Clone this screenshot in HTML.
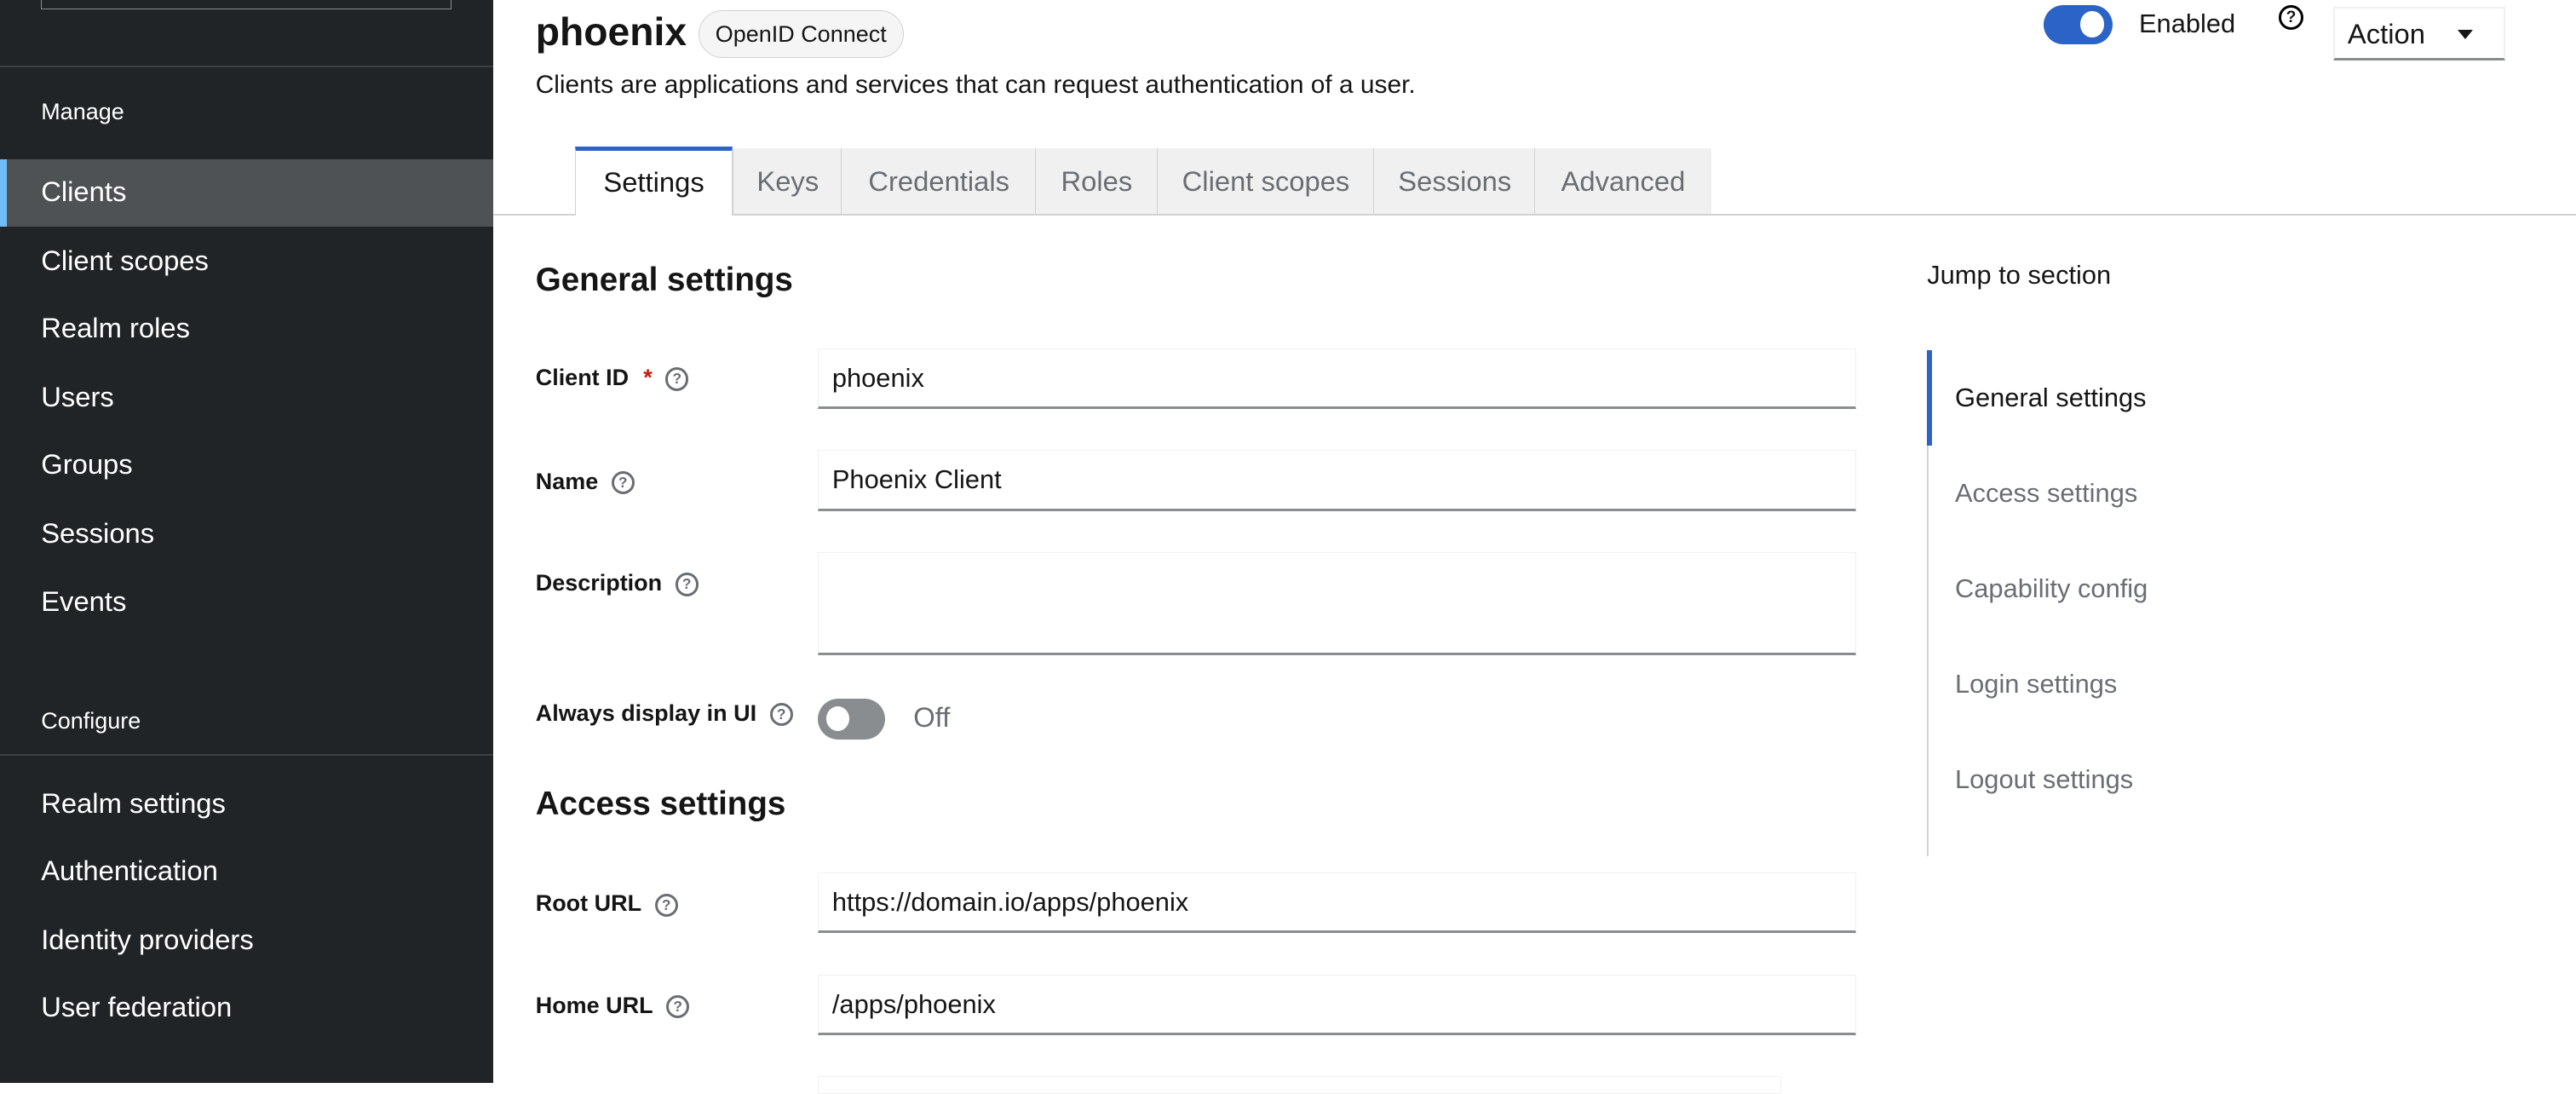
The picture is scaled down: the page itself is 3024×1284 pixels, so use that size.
<!DOCTYPE html>
<html><head><meta charset="utf-8"><style>
html{zoom:1.92857}
body{margin:0;width:1568px;height:659px;overflow:hidden;background:#fff;font-family:"Liberation Sans",sans-serif;color:#151515;position:relative}
.a{position:absolute}
.side{left:0;top:0;width:300px;height:659px;background:#212427}
.nav{position:absolute;left:25px;color:#fff;font-size:17px}
.sec{position:absolute;left:25px;color:#fff;font-size:14px}
.lbl{position:absolute;left:326px;font-size:14px;font-weight:bold}
.q{display:inline-block;width:11px;height:11px;border:1.6px solid #6a6e73;border-radius:50%;font-size:9px;line-height:11px;text-align:center;color:#6a6e73;font-weight:bold;vertical-align:middle;margin-left:8px}
.inp{position:absolute;left:498px;width:632px;border:1px solid #f0f0f0;border-bottom:2px solid #8a8d90;font-size:16px;box-sizing:border-box;padding-left:8px}
.tab{position:absolute;top:90px;height:40px;background:#f0f0f0;border-left:1px solid #d2d2d2;color:#6a6e73;font-size:17px;line-height:40px;text-align:center}
.jl{position:absolute;left:1190px;font-size:16px;color:#6a6e73}
</style></head><body>
<div class="a side">
<div class="a" style="left:25px;top:-2px;width:249px;height:7px;border:1px solid #8a8d90;border-top:none"></div>
<div class="a" style="left:0;top:40px;width:300px;height:1px;background:#3c3f42"></div>
<div class="sec" style="top:60px">Manage</div>
<div class="a" style="left:0;top:97px;width:300px;height:41px;background:#4f5255"></div>
<div class="a" style="left:0;top:97px;width:4px;height:41px;background:#73bcf7"></div>
<div class="nav" style="top:107px">Clients</div>
<div class="nav" style="top:149px">Client scopes</div>
<div class="nav" style="top:190px">Realm roles</div>
<div class="nav" style="top:232px">Users</div>
<div class="nav" style="top:273px">Groups</div>
<div class="nav" style="top:315px">Sessions</div>
<div class="nav" style="top:356px">Events</div>
<div class="sec" style="top:431px">Configure</div>
<div class="a" style="left:0;top:459px;width:300px;height:1px;background:#3c3f42"></div>
<div class="nav" style="top:479px">Realm settings</div>
<div class="nav" style="top:520px">Authentication</div>
<div class="nav" style="top:562px">Identity providers</div>
<div class="nav" style="top:603px">User federation</div>
</div>

<div class="a" style="left:326px;top:5px;font-size:24px;font-weight:bold">phoenix</div>
<div class="a" style="left:425px;top:6px;height:28px;width:124px;border:1px solid #d2d2d2;border-radius:15px;background:#f5f5f5;font-size:14px;line-height:28px;text-align:center">OpenID Connect</div>
<div class="a" style="left:326px;top:43px;font-size:15.5px">Clients are applications and services that can request authentication of a user.</div>

<div class="a" style="left:1244px;top:3px;width:42px;height:24px;border-radius:12px;background:#2b63c6"></div>
<div class="a" style="left:1266px;top:7px;width:15px;height:16px;border-radius:50%;background:#fff"></div>
<div class="a" style="left:1302px;top:5px;font-size:16px">Enabled</div>
<div class="a" style="left:1387px;top:3px;width:12px;height:12px;border:2px solid #000;border-radius:50%;font-size:10px;font-weight:bold;line-height:12px;text-align:center">?</div>
<div class="a" style="left:1420px;top:4px;width:105px;height:33px;border:1.5px solid #f0f0f0;border-bottom:2px solid #8a8d90;box-sizing:border-box"></div>
<div class="a" style="left:1429px;top:11px;font-size:17px">Action</div>
<div class="a" style="left:1496px;top:18px;width:0;height:0;border-left:5px solid transparent;border-right:5px solid transparent;border-top:6px solid #151515"></div>

<div class="a" style="left:300px;top:130px;width:1268px;height:1px;background:#d2d2d2"></div>
<div class="a" style="left:350px;top:89px;width:96px;height:42px;background:#fff;border-left:1px solid #d2d2d2;border-right:1px solid #d2d2d2;border-top:3px solid #2b63c6;box-sizing:border-box;font-size:17px;line-height:38px;text-align:center">Settings</div>
<div class="tab" style="left:446px;width:66px">Keys</div>
<div class="tab" style="left:512px;width:118px">Credentials</div>
<div class="tab" style="left:630px;width:74px">Roles</div>
<div class="tab" style="left:704px;width:132px">Client scopes</div>
<div class="tab" style="left:836px;width:98px">Sessions</div>
<div class="tab" style="left:934px;width:107px">Advanced</div>

<div class="a" style="left:326px;top:159px;font-size:20px;font-weight:bold">General settings</div>
<div class="lbl" style="top:222px">Client ID <span style="color:#c9190b;margin-left:5px">*</span><span class="q">?</span></div>
<div class="inp" style="top:212px;height:37px;line-height:35px">phoenix</div>
<div class="lbl" style="top:285px">Name<span class="q">?</span></div>
<div class="inp" style="top:274px;height:37px;line-height:35px">Phoenix Client</div>
<div class="lbl" style="top:347px">Description<span class="q">?</span></div>
<div class="inp" style="top:336px;height:63px"></div>
<div class="lbl" style="top:426px">Always display in UI<span class="q">?</span></div>
<div class="a" style="left:498px;top:425px;width:41px;height:25px;border-radius:13px;background:#8a8d90"></div>
<div class="a" style="left:503px;top:430px;width:14px;height:15px;border-radius:50%;background:#fff"></div>
<div class="a" style="left:556px;top:427px;font-size:17px;color:#6a6e73">Off</div>

<div class="a" style="left:326px;top:478px;font-size:20px;font-weight:bold">Access settings</div>
<div class="lbl" style="top:542px">Root URL<span class="q">?</span></div>
<div class="inp" style="top:531px;height:37px;line-height:35px">https://domain.io/apps/phoenix</div>
<div class="lbl" style="top:604px">Home URL<span class="q">?</span></div>
<div class="inp" style="top:593px;height:37px;line-height:35px">/apps/phoenix</div>
<div class="a" style="left:498px;top:655px;width:585px;height:10px;border:1px solid #f0f0f0"></div>

<div class="a" style="left:1173px;top:158px;font-size:16px">Jump to section</div>
<div class="a" style="left:1173px;top:213px;width:1px;height:308px;background:#d2d2d2"></div>
<div class="a" style="left:1173px;top:213px;width:3px;height:58px;background:#2b63c6"></div>
<div class="jl" style="top:233px;color:#151515">General settings</div>
<div class="jl" style="top:291px">Access settings</div>
<div class="jl" style="top:349px">Capability config</div>
<div class="jl" style="top:407px">Login settings</div>
<div class="jl" style="top:465px">Logout settings</div>
</body></html>
